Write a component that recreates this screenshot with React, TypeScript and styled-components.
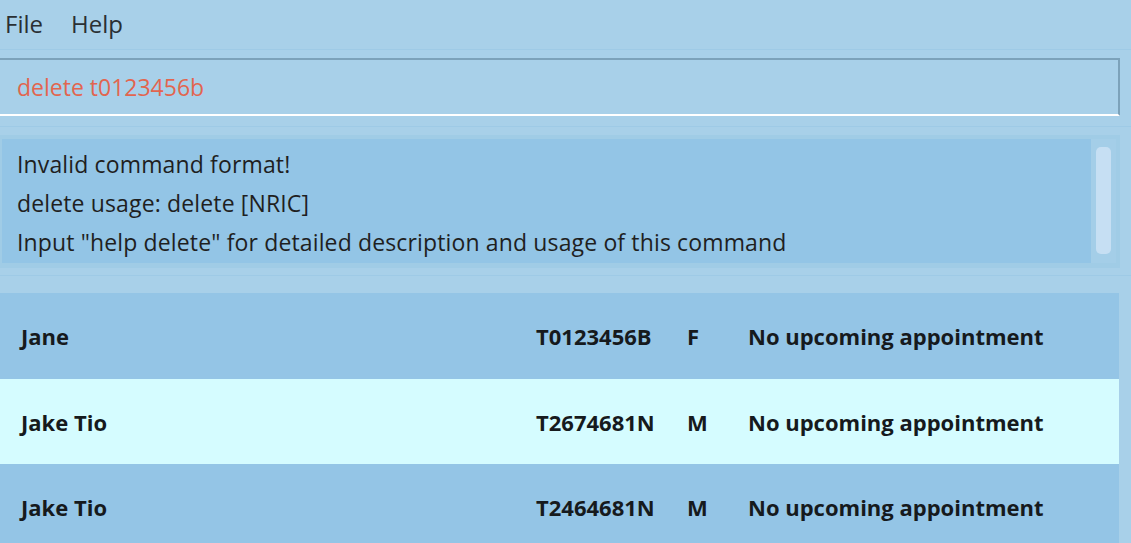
import styled, { createGlobalStyle } from 'styled-components';

const GlobalStyle = createGlobalStyle`
  html, body {
    margin: 0;
    padding: 0;
    background: #a8d0e9;
    font-family: "Open Sans", "Noto Sans", sans-serif;
    overflow: hidden;
  }
`;

const Window = styled.div`
  width: 1131px;
  height: 543px;
  display: flex;
  flex-direction: column;
  background: #a8d0e9;
  overflow: hidden;
`;

const MenuBar = styled.div`
  height: 50px;
  flex-shrink: 0;
  display: flex;
  align-items: center;
  gap: 28px;
  padding-left: 5px;
  padding-bottom: 2px;
  border-bottom: 1px solid #9ecae6;
  box-sizing: border-box;
`;

const MenuItem = styled.span`
  font-size: 24px;
  color: #2a2f33;
`;

const CommandSection = styled.div`
  flex-shrink: 0;
  padding: 8px 11px 10px 0;
  border-bottom: 1px solid #9ecae6;
`;

const CommandBox = styled.div`
  height: 58px;
  box-sizing: border-box;
  border-top: 2px solid #7ca2ba;
  border-right: 2px solid #7ca2ba;
  border-bottom: 2px solid #ffffff;
  display: flex;
  align-items: center;
  padding-left: 17px;
  font-size: 23px;
  color: #e2654f;
`;

const ResultSection = styled.div`
  flex-shrink: 0;
  padding: 8px 11px 7px 0;
  border-bottom: 1px solid #9ecae6;
`;

const ResultFrame = styled.div`
  height: 133px;
  box-sizing: border-box;
  border: 4px solid #a0cce6;
  border-left-width: 2px;
  border-bottom-width: 5px;
  display: flex;
  background: #a4cee8;
`;

const ResultText = styled.div`
  flex: 1;
  background: #93c5e6;
  padding: 6px 15px 0;
  display: flex;
  flex-direction: column;
`;

const ResultLine = styled.div`
  font-size: 23px;
  line-height: 39px;
  letter-spacing: 0.14px;
  color: #1f1f1f;
  white-space: nowrap;
`;

const ScrollTrack = styled.div`
  width: 25px;
  display: flex;
  justify-content: center;
  padding-top: 8px;
  box-sizing: border-box;
`;

const ScrollThumb = styled.div`
  width: 15px;
  height: 107px;
  border-radius: 5px;
  background: #c6dff3;
`;

const List = styled.div`
  margin-top: 17px;
  margin-right: 12px;
  display: flex;
  flex-direction: column;
`;

const Row = styled.div<{ $light?: boolean }>`
  height: ${(p) => (p.$light ? 85 : 86)}px;
  flex-shrink: 0;
  display: grid;
  grid-template-columns: 515px 151px 61px 1fr;
  align-items: center;
  padding-left: 21px;
  background: ${(p) => (p.$light ? '#d5fcff' : '#94c5e6')};
  font-size: 22px;
  font-weight: 700;
  color: #161a1d;
`;

const Cell = styled.span`
  white-space: nowrap;
`;

const patients = [
  { name: 'Jane', nric: 'T0123456B', sex: 'F', appt: 'No upcoming appointment' },
  { name: 'Jake Tio', nric: 'T2674681N', sex: 'M', appt: 'No upcoming appointment' },
  { name: 'Jake Tio', nric: 'T2464681N', sex: 'M', appt: 'No upcoming appointment' },
];

export default function App() {
  return (
    <Window>
      <GlobalStyle />
      <MenuBar>
        <MenuItem>File</MenuItem>
        <MenuItem>Help</MenuItem>
      </MenuBar>
      <CommandSection>
        <CommandBox>delete t0123456b</CommandBox>
      </CommandSection>
      <ResultSection>
        <ResultFrame>
          <ResultText>
            <ResultLine>Invalid command format!</ResultLine>
            <ResultLine>delete usage: delete [NRIC]</ResultLine>
            <ResultLine>Input "help delete" for detailed description and usage of this command</ResultLine>
          </ResultText>
          <ScrollTrack>
            <ScrollThumb />
          </ScrollTrack>
        </ResultFrame>
      </ResultSection>
      <List>
        {patients.map((p, i) => (
          <Row key={i} $light={i % 2 === 1}>
            <Cell>{p.name}</Cell>
            <Cell>{p.nric}</Cell>
            <Cell>{p.sex}</Cell>
            <Cell>{p.appt}</Cell>
          </Row>
        ))}
      </List>
    </Window>
  );
}
